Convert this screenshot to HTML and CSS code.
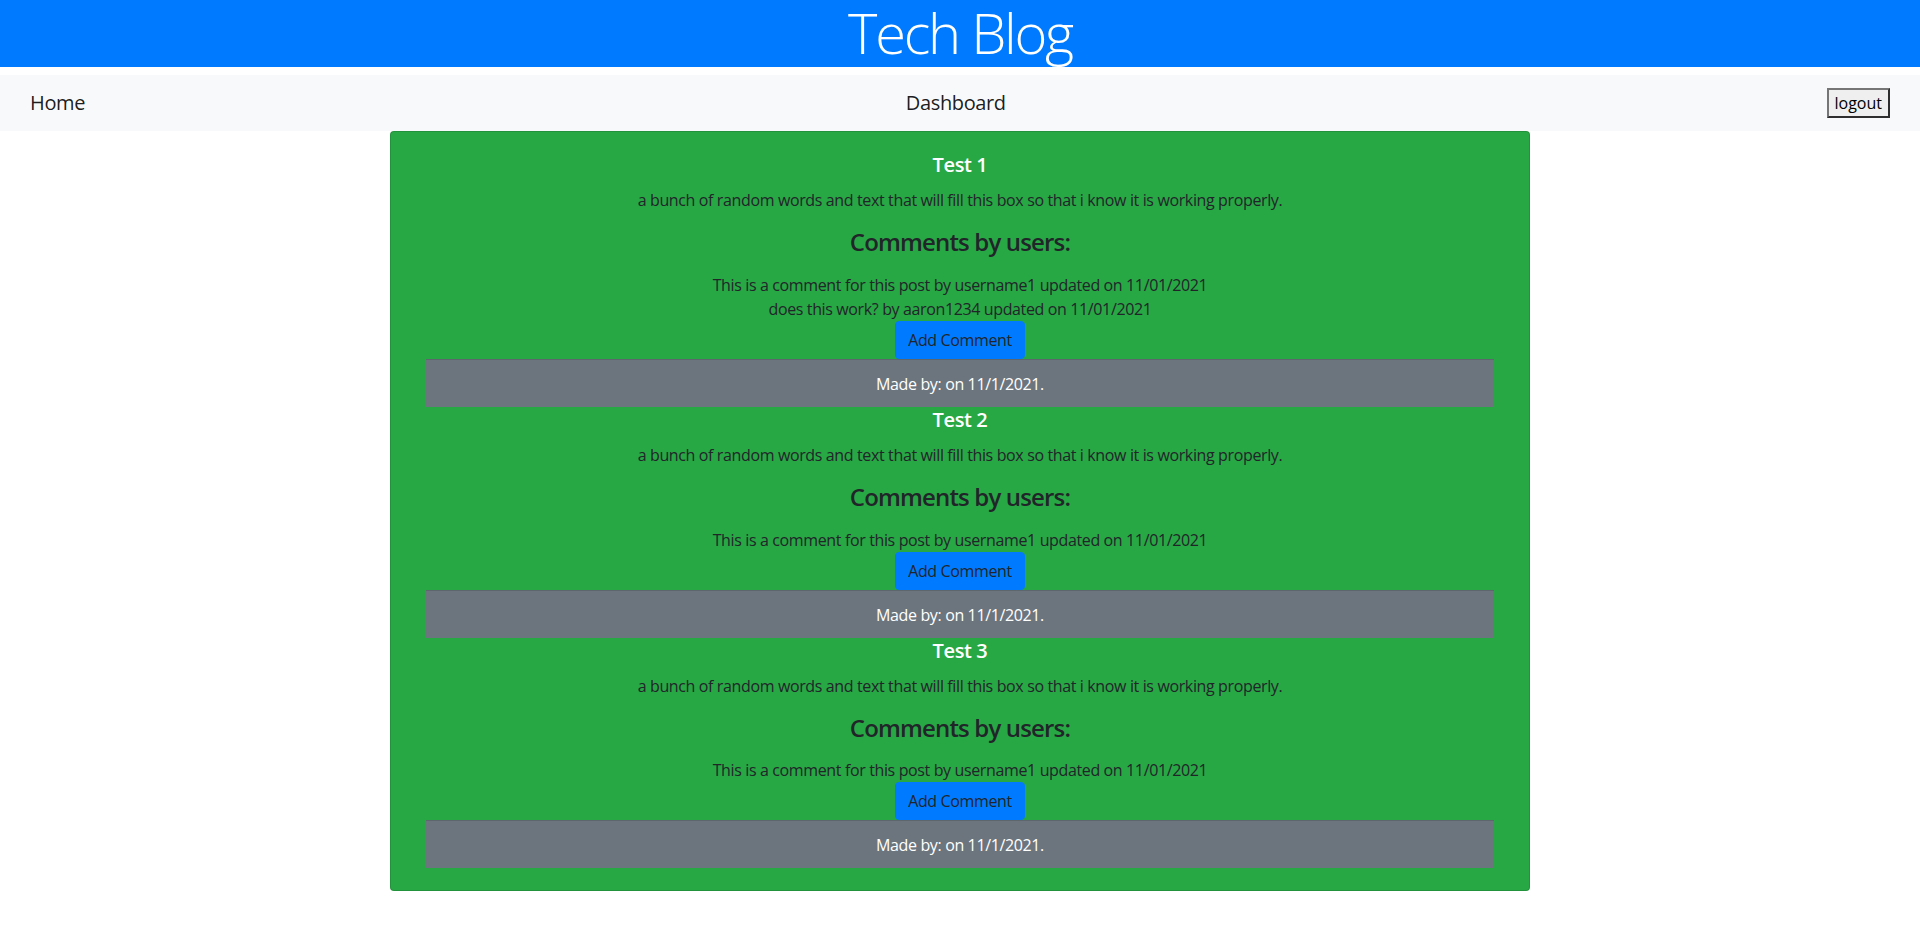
FILE: index.html
```html
<!DOCTYPE html>
<html lang="en">
<head>
<meta charset="utf-8">
<title>Tech Blog</title>
<link rel="stylesheet" href="styles.css">
</head>
<body>
<header class="site-header">
  <h1 class="site-title">Tech Blog</h1>
</header>
<nav class="navbar">
  <a class="nav-brand" href="#">Home</a>
  <a class="nav-brand" href="#">Dashboard</a>
  <button class="logout-btn" type="button">logout</button>
</nav>
<main class="posts-card">
  <section class="post">
    <h5 class="post-title">Test 1</h5>
    <p class="post-body">a bunch of random words and text that will fill this box so that i know it is working properly.</p>
    <h4 class="comments-heading">Comments by users:</h4>
    <div class="comment">This is a comment for this post by username1 updated on 11/01/2021</div>
    <div class="comment">does this work? by aaron1234 updated on 11/01/2021</div>
    <div class="btn-row"><button class="add-btn" type="button">Add Comment</button></div>
    <div class="post-footer">Made by: on 11/1/2021.</div>
  </section>
  <section class="post">
    <h5 class="post-title">Test 2</h5>
    <p class="post-body">a bunch of random words and text that will fill this box so that i know it is working properly.</p>
    <h4 class="comments-heading">Comments by users:</h4>
    <div class="comment">This is a comment for this post by username1 updated on 11/01/2021</div>
    <div class="btn-row"><button class="add-btn" type="button">Add Comment</button></div>
    <div class="post-footer">Made by: on 11/1/2021.</div>
  </section>
  <section class="post">
    <h5 class="post-title">Test 3</h5>
    <p class="post-body">a bunch of random words and text that will fill this box so that i know it is working properly.</p>
    <h4 class="comments-heading">Comments by users:</h4>
    <div class="comment">This is a comment for this post by username1 updated on 11/01/2021</div>
    <div class="btn-row"><button class="add-btn" type="button">Add Comment</button></div>
    <div class="post-footer">Made by: on 11/1/2021.</div>
  </section>
</main>
</body>
</html>
```
FILE: styles.css
```css
* {
  box-sizing: border-box;
}

body {
  margin: 0;
  background: #ffffff;
  color: #212529;
  font-family: "Open Sans", "Noto Sans", Roboto, sans-serif;
  font-size: 16px;
  line-height: 1.5;
  letter-spacing: -0.023em;
}

.site-header {
  background: #007bff;
  height: 67px;
  text-align: center;
}

.site-title {
  margin: 0;
  font-size: 56px;
  font-weight: 300;
  line-height: 65px;
  color: #ffffff;
  letter-spacing: -0.04em;
}

.navbar {
  margin-top: 8px;
  background: #f8f9fa;
  display: flex;
  justify-content: space-between;
  align-items: center;
  padding: 8px 30px;
  height: 56px;
}

.nav-brand {
  font-size: 20px;
  line-height: 30px;
  padding: 5px 0;
  color: rgba(0, 0, 0, 0.9);
  text-decoration: none;
}

.logout-btn {
  font-family: inherit;
  font-size: 16px;
  line-height: 24px;
  letter-spacing: 0;
  padding: 1px 6px;
  background: #efefef;
  color: #000000;
  border-style: solid;
  border-width: 2px;
  border-color: #767676 #2e2e2e #2e2e2e #767676;
  border-radius: 0;
}

.posts-card {
  width: 1140px;
  margin: 0 auto;
  background: #28a745;
  border: 1px solid rgba(0, 0, 0, 0.125);
  border-radius: 4px;
  padding: 20px 35px 22px;
  text-align: center;
}

.post-title {
  margin: 0 0 11px;
  padding-top: 1px;
  font-size: 20px;
  font-weight: 600;
  line-height: 24px;
  color: #ffffff;
}

.post-body {
  margin: 0 0 16px;
}

.comments-heading {
  margin: 0 0 16px;
  font-size: 24px;
  font-weight: 600;
  line-height: 28.8px;
  letter-spacing: -0.035em;
}

.comment {
  line-height: 24px;
}

.btn-row {
  text-align: center;
}

.add-btn {
  font-family: inherit;
  font-size: 16px;
  line-height: 24px;
  letter-spacing: inherit;
  padding: 6px 12px;
  border: 1px solid #007bff;
  background: #007bff;
  color: #212529;
  border-radius: 4px;
  vertical-align: top;
}

.post-footer {
  background: #6c757d;
  border-top: 1px solid rgba(0, 0, 0, 0.125);
  color: #ffffff;
  padding: 12px 20px 11px;
  line-height: 24px;
}
```
